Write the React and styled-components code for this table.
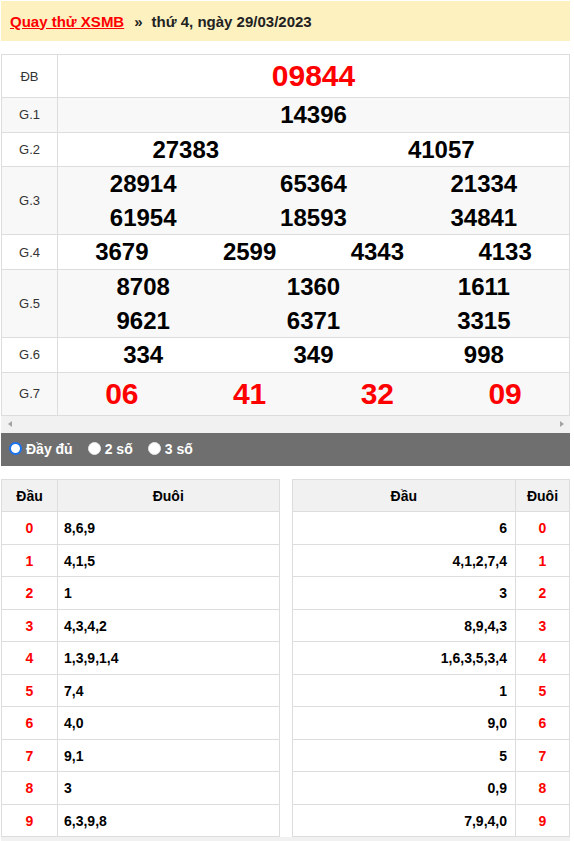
import React from 'react'
import styled, { createGlobalStyle } from 'styled-components'

const GlobalStyle = createGlobalStyle`
  body {
    margin: 0;
    background: #fff;
    font-family: "Liberation Sans", Arial, sans-serif;
    color: #000;
  }
`

const Page = styled.div`
  width: 569px;
  margin-left: 1px;
  padding-top: 1px;
`

const TitleBar = styled.div`
  height: 40px;
  background: #fdf1c0;
  display: flex;
  align-items: center;
  padding: 0 9px;
  font-size: 15px;
  font-weight: bold;
  color: #222;
`

const TitleLink = styled.a`
  color: #f00;
  text-decoration: underline;
`

const Sep = styled.span`
  margin: 0 9px 0 10px;
`

const ResultTable = styled.div`
  margin-top: 13px;
  display: grid;
  grid-template-columns: 55px 1fr;
  gap: 1px;
  padding: 1px;
  background: #ddd;
`

const Label = styled.div`
  background: ${p => (p.odd ? '#f8f8f8' : '#fff')};
  display: flex;
  align-items: center;
  justify-content: center;
  font-size: 13px;
  color: #333;
`

const NumberGrid = styled.div`
  background: ${p => (p.odd ? '#f8f8f8' : '#fff')};
  display: grid;
  grid-template-columns: repeat(${p => p.cols}, 1fr);
`

const Num = styled.div`
  text-align: center;
  font-weight: bold;
  font-size: ${p => (p.big ? '30px' : '24px')};
  line-height: ${p => (p.big ? '42px' : '33.6px')};
  color: ${p => (p.red ? '#f00' : '#000')};
`

const ScrollTrack = styled.div`
  height: 17px;
  background: #f1f1f1;
  display: flex;
  align-items: center;
  justify-content: space-between;
  padding: 0 6px 0 7px;
`

const Arrow = styled.span`
  width: 0;
  height: 0;
  border-top: 3.5px solid transparent;
  border-bottom: 3.5px solid transparent;
  ${p => (p.dir === 'left'
    ? 'border-right: 4px solid #a3a3a3;'
    : 'border-left: 4px solid #a3a3a3;')}
`

const OptionBar = styled.div`
  height: 33px;
  background: #6f6f6f;
  display: flex;
  align-items: center;
  padding: 0 8px;
  color: #fff;
  font-size: 14px;
  font-weight: bold;
`

const Option = styled.label`
  display: flex;
  align-items: center;
  margin-right: 15px;
`

const Radio = styled.span`
  box-sizing: border-box;
  width: 13px;
  height: 13px;
  border-radius: 50%;
  background: #fff;
  border: ${p => (p.checked ? '2px solid #1b72f0' : '1px solid #e8e8e8')};
  margin: -2px 4px 0 0;
`

const LotoWrap = styled.div`
  margin-top: 13px;
  display: grid;
  grid-template-columns: 1fr 1fr;
  gap: 12px;
`

const LotoTable = styled.div`
  display: grid;
  grid-template-columns: ${p => (p.reverse ? '1fr 53px' : '55px 1fr')};
  grid-auto-rows: 31.5px;
  gap: 1px;
  padding: 1px;
  background: #ddd;
`

const HeadCell = styled.div`
  background: #f1f1f1;
  display: flex;
  align-items: center;
  justify-content: center;
  font-size: 14px;
  font-weight: bold;
`

const KeyCell = styled.div`
  background: #fff;
  display: flex;
  align-items: center;
  justify-content: center;
  font-size: 14px;
  font-weight: bold;
  color: #f00;
`

const ValueCell = styled.div`
  background: #fff;
  display: flex;
  align-items: center;
  justify-content: ${p => (p.right ? 'flex-end' : 'flex-start')};
  padding: 0 ${p => (p.right ? '8px' : '0')} 0 ${p => (p.right ? '0' : '6px')};
  font-size: 14px;
  font-weight: bold;
`

const Footer = styled.div`
  height: 6px;
  background: #f1f1f1;
`

const prizes = [
  { label: 'ĐB', cols: 1, nums: ['09844'], big: true },
  { label: 'G.1', cols: 1, nums: ['14396'] },
  { label: 'G.2', cols: 2, nums: ['27383', '41057'] },
  { label: 'G.3', cols: 3, nums: ['28914', '65364', '21334', '61954', '18593', '34841'] },
  { label: 'G.4', cols: 4, nums: ['3679', '2599', '4343', '4133'] },
  { label: 'G.5', cols: 3, nums: ['8708', '1360', '1611', '9621', '6371', '3315'] },
  { label: 'G.6', cols: 3, nums: ['334', '349', '998'] },
  { label: 'G.7', cols: 4, nums: ['06', '41', '32', '09'], big: true }
]

const heads = ['8,6,9', '4,1,5', '1', '4,3,4,2', '1,3,9,1,4', '7,4', '4,0', '9,1', '3', '6,3,9,8']
const tails = ['6', '4,1,2,7,4', '3', '8,9,4,3', '1,6,3,5,3,4', '1', '9,0', '5', '0,9', '7,9,4,0']

export default function App () {
  return (
    <Page>
      <GlobalStyle />
      <TitleBar>
        <TitleLink>Quay thử XSMB</TitleLink>
        <Sep>»</Sep>
        <span>thứ 4, ngày 29/03/2023</span>
      </TitleBar>

      <ResultTable>
        {prizes.map((row, i) => (
          <React.Fragment key={row.label}>
            <Label odd={i % 2 === 1}>{row.label}</Label>
            <NumberGrid odd={i % 2 === 1} cols={row.cols}>
              {row.nums.map((n, j) => (
                <Num key={j} big={row.big} red={row.big}>{n}</Num>
              ))}
            </NumberGrid>
          </React.Fragment>
        ))}
      </ResultTable>
      <ScrollTrack>
        <Arrow dir='left' />
        <Arrow dir='right' />
      </ScrollTrack>

      <OptionBar>
        <Option><Radio checked />Đầy đủ</Option>
        <Option><Radio />2 số</Option>
        <Option><Radio />3 số</Option>
      </OptionBar>

      <LotoWrap>
        <LotoTable>
          <HeadCell>Đầu</HeadCell>
          <HeadCell>Đuôi</HeadCell>
          {heads.map((v, i) => (
            <React.Fragment key={i}>
              <KeyCell>{i}</KeyCell>
              <ValueCell>{v}</ValueCell>
            </React.Fragment>
          ))}
        </LotoTable>
        <LotoTable reverse>
          <HeadCell>Đầu</HeadCell>
          <HeadCell>Đuôi</HeadCell>
          {tails.map((v, i) => (
            <React.Fragment key={i}>
              <ValueCell right>{v}</ValueCell>
              <KeyCell>{i}</KeyCell>
            </React.Fragment>
          ))}
        </LotoTable>
      </LotoWrap>
      <Footer />
    </Page>
  )
}
